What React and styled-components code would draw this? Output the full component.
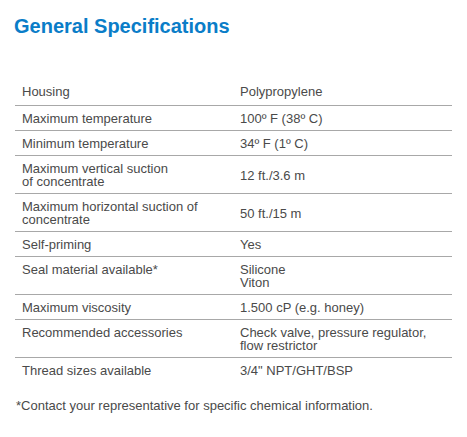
import React from "react";
import styled, { createGlobalStyle } from "styled-components";

const Global = createGlobalStyle`
  html, body { margin: 0; padding: 0; background: #fff; }
  body { font-family: "Liberation Sans", Arial, sans-serif; }
`;

const Page = styled.div`
  width: 467px;
  height: 437px;
  padding: 14px 15px 0 15px;
  box-sizing: border-box;
`;

const Title = styled.h2`
  margin: 0 0 0 -1px;
  font-size: 20px;
  line-height: 24px;
  font-weight: 700;
  color: #0a7dc8;
`;

const Table = styled.div`
  margin-top: 44px;
  width: 437px;
  display: flex;
  flex-direction: column;
`;

const Row = styled.div`
  display: grid;
  grid-template-columns: 218px 1fr;
  padding: ${(p) => (p.$first ? "3px 0 7px 7px" : "6px 0 5px 7px")};
  border-bottom: ${(p) => (p.$last ? "none" : "1px solid #a8a8a8")};
  font-size: 13px;
  line-height: 13px;
  color: #4a4a4a;
`;

const Cell = styled.div`
  align-self: ${(p) => (p.$center ? "center" : "start")};
`;

const Note = styled.p`
  margin: 16px 0 0 1px;
  font-size: 13px;
  line-height: 15px;
  color: #4a4a4a;
`;

const rows = [
  ["Housing", "Polypropylene"],
  ["Maximum temperature", "100º F (38º C)"],
  ["Minimum temperature", "34º F (1º C)"],
  [["Maximum vertical suction", "of concentrate"], "12 ft./3.6 m", true],
  [["Maximum horizontal suction of", "concentrate"], "50 ft./15 m", true],
  ["Self-priming", "Yes"],
  ["Seal material available*", ["Silicone", "Viton"]],
  ["Maximum viscosity", "1.500 cP (e.g. honey)"],
  ["Recommended accessories", ["Check valve, pressure regulator,", "flow restrictor"]],
  ["Thread sizes available", "3/4\" NPT/GHT/BSP"],
];

const lines = (v) =>
  Array.isArray(v) ? v.map((l, i) => <div key={i}>{l}</div>) : v;

export default function App() {
  return (
    <>
      <Global />
      <Page>
        <Title>General Specifications</Title>
        <Table>
          {rows.map(([a, b, center], i) => (
            <Row key={i} $first={i === 0} $last={i === rows.length - 1}>
              <Cell>{lines(a)}</Cell>
              <Cell $center={center}>{lines(b)}</Cell>
            </Row>
          ))}
        </Table>
        <Note>*Contact your representative for specific chemical information.</Note>
      </Page>
    </>
  );
}
